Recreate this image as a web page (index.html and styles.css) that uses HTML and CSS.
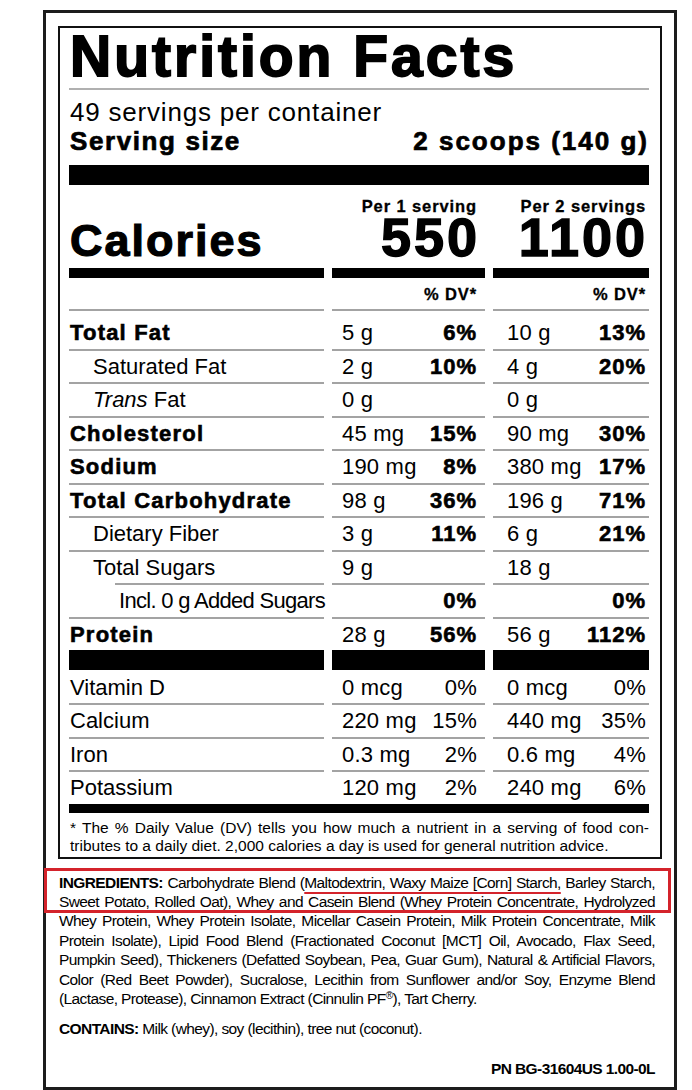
FILE: index.html
```html
<!DOCTYPE html>
<html lang="en">
<head>
<meta charset="utf-8">
<title>Nutrition Facts</title>
<link rel="stylesheet" href="styles.css">
</head>
<body>
<div class="label">
  <section class="facts">
    <h1 class="title">Nutrition Facts</h1>
    <p class="servings">49 servings per container</p>
    <div class="size"><span class="size-key">Serving size</span><span class="size-val">2 scoops (140 g)</span></div>
    <div class="bar bar-thick"></div>

    <div class="row per-row"><span></span><span class="c2">Per 1 serving</span><span class="c3">Per 2 servings</span></div>
    <div class="row cal-row"><span class="cal">Calories</span><span class="num c2">550</span><span class="num c3">1100</span></div>
    <div class="row bars bars-mid"><span></span><span></span><span></span></div>
    <div class="row dv-row"><span></span><span class="c2">% DV*</span><span class="c3">% DV*</span></div>

    <div class="row n first"><span class="lab heavy">Total Fat</span><span class="val c2"><span>5 g</span><b>6%</b></span><span class="val c3"><span>10 g</span><b>13%</b></span></div>
    <div class="row n"><span class="lab sub">Saturated Fat</span><span class="val c2"><span>2 g</span><b>10%</b></span><span class="val c3"><span>4 g</span><b>20%</b></span></div>
    <div class="row n"><span class="lab sub"><i>Trans</i> Fat</span><span class="val c2"><span>0 g</span></span><span class="val c3"><span>0 g</span></span></div>
    <div class="row n"><span class="lab heavy">Cholesterol</span><span class="val c2"><span>45 mg</span><b>15%</b></span><span class="val c3"><span>90 mg</span><b>30%</b></span></div>
    <div class="row n"><span class="lab heavy">Sodium</span><span class="val c2"><span>190 mg</span><b>8%</b></span><span class="val c3"><span>380 mg</span><b>17%</b></span></div>
    <div class="row n"><span class="lab heavy">Total Carbohydrate</span><span class="val c2"><span>98 g</span><b>36%</b></span><span class="val c3"><span>196 g</span><b>71%</b></span></div>
    <div class="row n"><span class="lab sub">Dietary Fiber</span><span class="val c2"><span>3 g</span><b>11%</b></span><span class="val c3"><span>6 g</span><b>21%</b></span></div>
    <div class="row n"><span class="lab sub">Total Sugars</span><span class="val c2"><span>9 g</span></span><span class="val c3"><span>18 g</span></span></div>
    <div class="row n"><span class="lab subsub">Incl. 0 g Added Sugars</span><span class="val c2"><b>0%</b></span><span class="val c3"><b>0%</b></span></div>
    <div class="row n"><span class="lab heavy">Protein</span><span class="val c2"><span>28 g</span><b>56%</b></span><span class="val c3"><span>56 g</span><b>112%</b></span></div>

    <div class="row bars bars-thick"><span></span><span></span><span></span></div>

    <div class="row n vit first-vit"><span class="lab">Vitamin D</span><span class="val c2"><span>0 mcg</span><span>0%</span></span><span class="val c3"><span>0 mcg</span><span>0%</span></span></div>
    <div class="row n vit"><span class="lab">Calcium</span><span class="val c2"><span>220 mg</span><span>15%</span></span><span class="val c3"><span>440 mg</span><span>35%</span></span></div>
    <div class="row n vit"><span class="lab">Iron</span><span class="val c2"><span>0.3 mg</span><span>2%</span></span><span class="val c3"><span>0.6 mg</span><span>4%</span></span></div>
    <div class="row n vit"><span class="lab">Potassium</span><span class="val c2"><span>120 mg</span><span>2%</span></span><span class="val c3"><span>240 mg</span><span>6%</span></span></div>

    <div class="bar bar-mid"></div>
    <div class="foot">
      <span class="jline">* The % Daily Value (DV) tells you how much a nutrient in a serving of food con-</span>
      <span class="line">tributes to a daily diet. 2,000 calories a day is used for general nutrition advice.</span>
    </div>
  </section>

  <div class="ingredients">
    <div class="marked">
      <span class="jline"><b>INGREDIENTS:</b> Carbohydrate Blend (<span class="uline">Maltodextrin, Waxy Maize [Corn] Starch,</span> Barley Starch,</span>
      <span class="jline">Sweet Potato, Rolled Oat), Whey and Casein Blend (Whey Protein Concentrate, Hydrolyzed</span>
    </div>
    <span class="jline">Whey Protein, Whey Protein Isolate, Micellar Casein Protein, Milk Protein Concentrate, Milk</span>
    <span class="jline">Protein Isolate), Lipid Food Blend (Fractionated Coconut [MCT] Oil, Avocado, Flax Seed,</span>
    <span class="jline">Pumpkin Seed), Thickeners (Defatted Soybean, Pea, Guar Gum), Natural &amp; Artificial Flavors,</span>
    <span class="jline">Color (Red Beet Powder), Sucralose, Lecithin from Sunflower and/or Soy, Enzyme Blend</span>
    <span class="line">(Lactase, Protease), Cinnamon Extract (Cinnulin PF<sup>®</sup>), Tart Cherry.</span>
    <p class="contains"><b>CONTAINS:</b> Milk (whey), soy (lecithin), tree nut (coconut).</p>
    <p class="pn">PN BG-31604US 1.00-0L</p>
  </div>
</div>
</body>
</html>
```

FILE: styles.css
```css
html {
  overflow: hidden;
}

body {
  margin: 0;
  background: #ffffff;
  color: #000000;
  font-family: "Liberation Sans", Arial, sans-serif;
}

.label {
  box-sizing: border-box;
  width: 634px;
  margin: 10px 0 0 43px;
  border: 3px solid #1c1c1c;
  padding: 13px 12px 9px 12px;
}

/* ---------- facts panel ---------- */
.facts {
  border: 2px solid #111111;
  padding: 0 11px 2px 9px;
}

.title {
  margin: 0;
  padding: 0 0 4px 1px;
  font-size: 57px;
  line-height: 56px;
  font-weight: 700;
  letter-spacing: 3px;
  -webkit-text-stroke: 1.8px #000;
  border-bottom: 2px solid #b0b0b0;
  white-space: nowrap;
}

.servings {
  margin: 8px 0 0 1px;
  font-size: 26px;
  line-height: 28px;
  letter-spacing: 0.8px;
  white-space: nowrap;
}

.size {
  display: flex;
  justify-content: space-between;
  margin-top: 1px;
  padding-left: 1px;
  font-size: 26px;
  line-height: 28px;
  font-weight: 700;
  -webkit-text-stroke: 0.7px #000;
  white-space: nowrap;
}

.size-key {
  letter-spacing: 1.6px;
}

.size-val {
  letter-spacing: 2px;
}

.bar {
  background: #000;
}

.bar-thick {
  height: 20px;
  margin-top: 10px;
}

.bar-mid {
  height: 9px;
}

/* ---------- three column rows ---------- */
.row {
  display: grid;
  grid-template-columns: 255px 153px 156px;
  column-gap: 8px;
}

.c2 {
  padding: 0 8px 0 10px;
  text-align: right;
}

.c3 {
  padding: 0 3px 0 14px;
  text-align: right;
}

.per-row {
  margin-top: 11px;
  font-size: 16.5px;
  line-height: 20px;
  font-weight: 700;
  letter-spacing: 0.9px;
  -webkit-text-stroke: 0.3px #000;
  white-space: nowrap;
}

.cal-row {
  height: 44px;
  align-items: baseline;
  font-weight: 700;
  white-space: nowrap;
}

.cal {
  padding-left: 1px;
  font-size: 45px;
  line-height: 42px;
  letter-spacing: 2px;
  -webkit-text-stroke: 1.2px #000;
}

.num {
  font-size: 54px;
  line-height: 42px;
  letter-spacing: 3px;
  -webkit-text-stroke: 1.4px #000;
}

.cal-row .c2 {
  padding-right: 5px;
}

.cal-row .c3 {
  padding-right: 1px;
}

.bars span {
  background: #000;
}

.bars-mid {
  height: 10px;
  margin-top: 8px;
}

.bars-thick {
  height: 20px;
}

.dv-row {
  margin-top: 6px;
  font-size: 16.5px;
  line-height: 20px;
  font-weight: 700;
  letter-spacing: 0.9px;
  -webkit-text-stroke: 0.3px #000;
}

/* nutrient rows */
.n {
  font-size: 22px;
  line-height: 31.5px;
  white-space: nowrap;
}

.n > span {
  border-top: 2px solid #a3a3a3;
}

.n.first {
  margin-top: 5px;
}

.n.first > span {
  padding-top: 6px;
}

.lab {
  padding-left: 1px;
}

.heavy {
  font-weight: 700;
  letter-spacing: 1.2px;
  -webkit-text-stroke: 0.6px #000;
}

.sub {
  padding-left: 24px;
}

.subsub {
  margin-left: 46px;
  padding-left: 4px;
  letter-spacing: -0.7px;
}

.val {
  display: flex;
  justify-content: space-between;
  text-align: left;
  letter-spacing: 0.2px;
}

.val b {
  margin-left: auto;
  font-weight: 700;
  letter-spacing: 1px;
  -webkit-text-stroke: 0.6px #000;
}

.vit .val span + span {
  margin-left: auto;
}

.n.first-vit > span {
  border-top: 0;
  padding-top: 1.5px;
}

/* footnote */
.foot {
  margin-top: 6px;
  font-size: 15.5px;
  line-height: 18px;
  padding-left: 1px;
}

.jline,
.line {
  display: block;
  white-space: nowrap;
}

.jline {
  text-align: justify;
  text-align-last: justify;
}

/* ---------- ingredients ---------- */
.ingredients {
  margin: 14px 7px 0 1px;
  font-size: 15.5px;
  line-height: 19.4px;
  letter-spacing: -0.6px;
}

.ingredients b {
  font-weight: 700;
}

.marked {
  position: relative;
}

.marked::before {
  content: "";
  position: absolute;
  left: -15px;
  right: -16px;
  top: -5px;
  bottom: -2px;
  border: 3px solid #d4232b;
  pointer-events: none;
}

.uline {
  text-decoration: underline;
  text-decoration-color: #d4232b;
  text-decoration-thickness: 2px;
  text-underline-offset: 4px;
}

sup {
  font-size: 10px;
  line-height: 0;
  vertical-align: 5px;
}

.contains {
  margin: 11px 0 0;
}

.pn {
  margin: 20px 0 0;
  text-align: right;
  font-weight: 700;
}
```
